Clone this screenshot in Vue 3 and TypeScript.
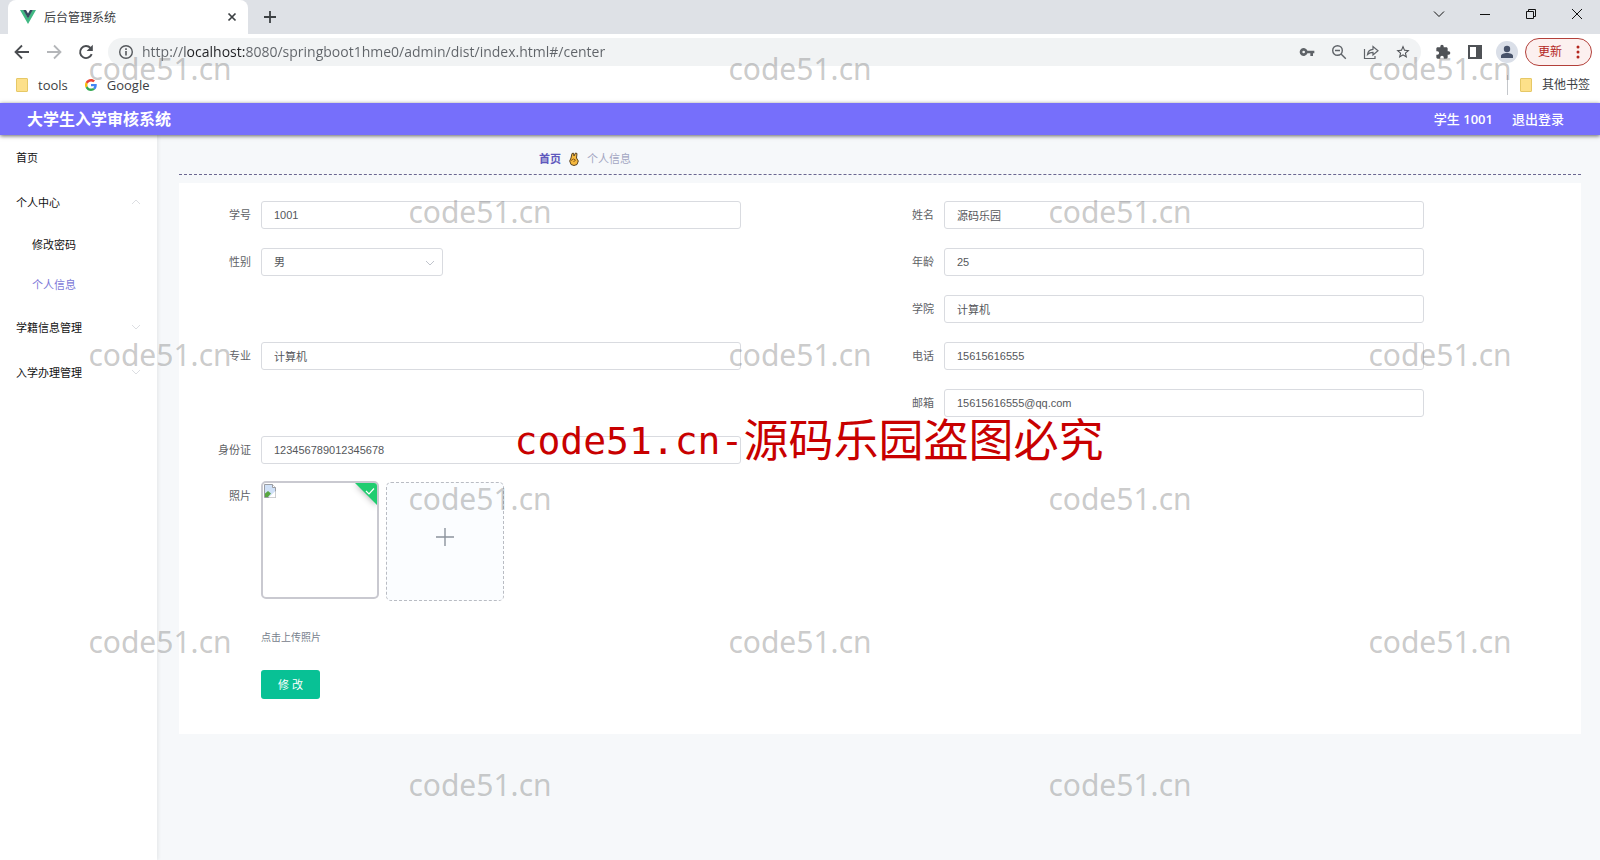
<script setup lang="ts">
import { ref } from 'vue'

interface Field {
  id: string
  label: string
  value: string
  side: 'left' | 'right'
  options?: string[]
}

interface MenuItem {
  label: string
  open?: boolean
  children?: { label: string; active?: boolean }[]
}

const fields = ref<Field[]>([
  { id: 'xuehao', label: '学号', value: '1001', side: 'left' },
  { id: 'xingming', label: '姓名', value: '源码乐园', side: 'right' },
  { id: 'xingbie', label: '性别', value: '男', side: 'left', options: ['男', '女'] },
  { id: 'nianling', label: '年龄', value: '25', side: 'right' },
  { id: 'xueyuan', label: '学院', value: '计算机', side: 'right' },
  { id: 'zhuanye', label: '专业', value: '计算机', side: 'left' },
  { id: 'dianhua', label: '电话', value: '15615616555', side: 'right' },
  { id: 'youxiang', label: '邮箱', value: '15615616555@qq.com', side: 'right' },
  { id: 'shenfenzheng', label: '身份证', value: '123456789012345678', side: 'left' },
])

const menu = ref<MenuItem[]>([
  { label: '首页' },
  {
    label: '个人中心',
    open: true,
    children: [{ label: '修改密码' }, { label: '个人信息', active: true }],
  },
  { label: '学籍信息管理', open: false, children: [] },
  { label: '入学办理管理', open: false, children: [] },
])

const url = ref('http://localhost:8080/springboot1hme0/admin/dist/index.html#/center')

// 5 x 6 grid, marks on every other cell
const cells = Array.from({ length: 30 }, (_, i) => (Math.floor(i / 5) + (i % 5)) % 2 === 0)
</script>

<template>
  <div class="window">
    <div class="tabs">
      <div class="tab">
        <svg class="favicon" viewBox="0 0 16 16"><path fill="#41b883" d="M0 1h3.5L8 9l4.500-8H16L8 15z" /><path fill="#35495e" d="M3.200 1H6l2 3.500L10 1h2.800L8 9.500z" /></svg>
        <span class="tab-title">后台管理系统</span>
        <button class="plain" aria-label="关闭标签页"><svg width="16" height="16" viewBox="0 0 16 16"><path d="M4.500 4.500l7 7m0-7l-7 7" stroke="#3c4043" stroke-width="1.700" /></svg></button>
      </div>
      <button class="plain new-tab" aria-label="新标签页"><svg width="16" height="16" viewBox="0 0 16 16"><path d="M8 2v12M2 8h12" stroke="#3c4043" stroke-width="1.800" /></svg></button>
      <div class="win-controls">
        <button class="plain" aria-label="搜索标签页"><svg width="14" height="14" viewBox="0 0 14 14"><path d="M2 4.500l5 5 5-5" /></svg></button>
        <button class="plain" aria-label="最小化"><svg width="14" height="14" viewBox="0 0 14 14"><path d="M2 7.500h10" /></svg></button>
        <button class="plain" aria-label="还原"><svg width="14" height="14" viewBox="0 0 14 14"><path d="M2.500 4.500h7v7h-7zM4.500 4.500v-2h7v7h-2" /></svg></button>
        <button class="plain" aria-label="关闭"><svg width="14" height="14" viewBox="0 0 14 14"><path d="M2 2l10 10M12 2L2 12" /></svg></button>
      </div>
    </div>

    <div class="toolbar">
      <button class="plain nav" aria-label="后退"><svg viewBox="0 0 16 16"><path d="M15 8H2M8 1.500L1.500 8 8 14.500" fill="none" stroke="#4a4d51" stroke-width="1.800" /></svg></button>
      <button class="plain nav" aria-label="前进"><svg viewBox="0 0 16 16"><path d="M1 8h13M8 1.500L14.500 8 8 14.500" fill="none" stroke="#b4b6b9" stroke-width="1.800" /></svg></button>
      <button class="plain nav" aria-label="刷新"><svg viewBox="0 0 16 16"><path d="M13.700 10.200A6 6 0 1 1 12.500 4" fill="none" stroke="#4a4d51" stroke-width="1.900" /><path d="M14.800 .8v6.200H8.600z" fill="#4a4d51" /></svg></button>
      <div class="address">
        <svg width="16" height="16" viewBox="0 0 16 16"><circle cx="8" cy="8" r="6.300" fill="none" stroke="#55585c" stroke-width="1.400" /><path d="M8 7v4.500M8 4.300v1.600" stroke="#55585c" stroke-width="1.600" /></svg>
        <input v-model="url" class="url" type="text" aria-label="地址" spellcheck="false" />
        <div class="actions">
          <button class="plain" aria-label="密码"><svg viewBox="0 0 24 24"><path fill="#5f6368" d="M12.650 10a6 6 0 1 0 0 4H17v4h4v-4h2v-4H12.650zM7 14a2 2 0 1 1 0-4 2 2 0 0 1 0 4z" /></svg></button>
          <button class="plain" aria-label="缩放"><svg viewBox="0 0 16 16" fill="none" stroke="#5f6368" stroke-width="1.400"><circle cx="6.500" cy="6.500" r="4.800" /><path d="M10 10l4.800 4.800M4 6.500h5" /></svg></button>
          <button class="plain" aria-label="分享"><svg viewBox="0 0 16 16" fill="none" stroke="#5f6368" stroke-width="1.200"><path d="M1.500 5v9.500h10.500V12M4.500 10.500c.5-3.500 2.500-5 5.500-5.200V2.500l5 4.300-5 4.200V8.300c-2.500 0-4 .7-5.500 2.200z" /></svg></button>
          <button class="plain" aria-label="收藏"><svg viewBox="0 0 24 24"><path fill="#4f5256" d="M22 9.240l-7.190-.62L12 2 9.190 8.630 2 9.240l5.460 4.730L5.820 21 12 17.270 18.180 21l-1.630-7.030L22 9.240zM12 15.400l-3.760 2.270 1-4.280-3.320-2.880 4.380-.38L12 6.100l1.710 4.040 4.380.38-3.320 2.880 1 4.280L12 15.400z" /></svg></button>
        </div>
      </div>
      <div class="extras">
        <button class="plain" aria-label="扩展程序"><svg viewBox="0 0 24 24"><path fill="#4f5256" d="M20.500 11H19V7c0-1.100-.9-2-2-2h-4V3.500a2.500 2.500 0 0 0-5 0V5H4c-1.100 0-2 .9-2 2v3.800h1.500a2.700 2.700 0 0 1 0 5.400H2V20c0 1.100.9 2 2 2h3.800v-1.500a2.700 2.700 0 0 1 5.400 0V22H17c1.100 0 2-.9 2-2v-4h1.500a2.500 2.500 0 0 0 0-5z" /></svg></button>
        <button class="plain" aria-label="侧边栏"><svg viewBox="0 0 16 16"><path fill="#4f5256" d="M1 1h14v14H1zM3 3v10h6V3z" fill-rule="evenodd" /></svg></button>
        <button class="plain avatar" aria-label="用户"><svg viewBox="0 0 16 16"><circle cx="8" cy="5" r="3.200" fill="#475269" /><path d="M2 14v-2c0-2 3-3 6-3s6 1 6 3v2z" fill="#475269" /></svg></button>
        <button class="update">更新<svg width="4" height="14" viewBox="0 0 4 14" fill="#b3261e"><circle cx="2" cy="2" r="1.500" /><circle cx="2" cy="7" r="1.500" /><circle cx="2" cy="12" r="1.500" /></svg></button>
      </div>
    </div>

    <div class="bookmarks">
      <a href="#tools"><i class="folder"></i>tools</a>
      <a href="#google"><svg width="12" height="12" viewBox="0 0 48 48"><path fill="#ea4335" d="M24 9.500c3.540 0 6.710 1.220 9.210 3.600l6.850-6.850C35.900 2.380 30.470 0 24 0 14.620 0 6.510 5.380 2.560 13.220l7.980 6.190C12.430 13.720 17.740 9.500 24 9.500z" /><path fill="#4285f4" d="M46.980 24.550c0-1.570-.15-3.090-.38-4.550H24v9.020h12.940c-.58 2.960-2.260 5.480-4.780 7.180l7.730 6c4.510-4.180 7.090-10.360 7.090-17.650z" /><path fill="#fbbc05" d="M10.530 28.590c-.48-1.450-.76-2.990-.76-4.590s.27-3.140.76-4.590l-7.980-6.190C.92 16.460 0 20.120 0 24c0 3.880.92 7.540 2.560 10.780l7.970-6.190z" /><path fill="#34a853" d="M24 48c6.480 0 11.930-2.130 15.890-5.810l-7.730-6c-2.150 1.450-4.920 2.300-8.160 2.300-6.260 0-11.570-4.220-13.470-9.910l-7.980 6.190C6.510 42.620 14.620 48 24 48z" /></svg>Google</a>
      <a class="other" href="#other"><i class="folder"></i>其他书签</a>
    </div>

    <header class="header">
      <h1>大学生入学审核系统</h1>
      <span class="user">学生 <b>1001</b></span>
      <button class="plain logout">退出登录</button>
    </header>

    <div class="body">
      <nav class="sidebar">
        <template v-for="item in menu" :key="item.label">
          <a class="item" :href="'#' + item.label">
            {{ item.label }}
            <svg v-if="item.children" width="10" height="10" viewBox="0 0 10 10" fill="none" stroke="#dcdee2">
              <path :d="item.open ? 'M1 7l4-4 4 4' : 'M1 3l4 4 4-4'" />
            </svg>
          </a>
          <a v-for="sub in item.children" :key="sub.label" class="item sub" :class="{ active: sub.active }" :href="'#' + sub.label">{{ sub.label }}</a>
        </template>
      </nav>

      <main class="main">
        <div class="crumbs">
          <a href="#home">首页</a>
          <svg width="10" height="14" viewBox="0 0 10 14"><path d="M2 6L3 1.500 4.500 1.200 5 4 6.500 1 8 1.500 7.500 6 9.300 9 8 12.500 5 13.500 2 12.500.7 9z" fill="#f5b83d" stroke="#5b4320" stroke-width="1" /><path d="M2 8.500l2.500-1.500 2 1-2 2" fill="none" stroke="#8a5a1a" /></svg>
          <span>个人信息</span>
        </div>

        <form class="card" @submit.prevent>
          <div class="fields">
            <div v-for="f in fields" :key="f.id" class="field" :class="f.side">
              <label :for="f.id">{{ f.label }}</label>
              <div v-if="f.options" class="select">
                <select :id="f.id" v-model="f.value">
                  <option v-for="o in f.options" :key="o">{{ o }}</option>
                </select>
                <svg width="10" height="10" viewBox="0 0 10 10" fill="none" stroke="#c0c4cc"><path d="M1 3l4 4 4-4" /></svg>
              </div>
              <input v-else :id="f.id" v-model="f.value" type="text" spellcheck="false" />
            </div>
          </div>

          <div class="field photo">
            <label for="photo">照片</label>
            <div class="photo-body">
              <div class="tiles">
                <div class="tile">
                  <svg width="12" height="14" viewBox="0 0 12 14"><path d="M.5.5h8l3 3v10H.5z" fill="#cfe0f7" stroke="#9a9da3" /><path d="M8.500.5v3h3" fill="#fff" stroke="#9a9da3" /><path d="M1 13V9.500L4 7l3 2.500L4 13z" fill="#58a641" /><path d="M4.500 13.500L11.500 7v6.500z" fill="#fff" /></svg>
                  <svg class="done" width="22" height="22" viewBox="0 0 22 22"><path d="M0 0h22v22z" fill="#20cd70" /><path d="M11 8l3 3 5-5.500" fill="none" stroke="#fff" stroke-width="1.200" /></svg>
                </div>
                <label class="add" for="photo">
                  <input id="photo" type="file" aria-label="上传照片" />
                  <svg width="18" height="18" viewBox="0 0 18 18"><path d="M9 0v18M0 9h18" stroke="#8c939d" stroke-width="1.400" /></svg>
                </label>
              </div>
              <p class="tip">点击上传照片</p>
              <button class="submit" type="submit">修 改</button>
            </div>
          </div>
        </form>
      </main>
    </div>

    <div class="marks">
      <span v-for="(on, i) in cells" :key="i"><template v-if="on">code51.cn</template></span>
    </div>
    <div class="notice"><span>code51.cn-</span>源码乐园盗图必究</div>
  </div>
</template>

<style>
body {
  margin: 0;
}
</style>

<style scoped>
* {
  box-sizing: border-box;
}
.window {
  position: relative;
  display: flex;
  flex-direction: column;
  min-height: 100vh;
  overflow: hidden;
  background: #fff;
  font-family: "Open Sans", "Noto Sans CJK SC", sans-serif;
  color: #3c4043;
}
svg {
  display: block;
  flex: none;
}
a {
  color: inherit;
  text-decoration: none;
}
button,
input,
select {
  font-family: inherit;
}
.plain {
  display: flex;
  align-items: center;
  justify-content: center;
  padding: 0;
  border: 0;
  background: none;
  color: inherit;
}
.tabs {
  display: flex;
  align-items: center;
  height: 34px;
  padding-left: 8px;
  background: #dee1e6;
}
.tab {
  display: flex;
  align-items: center;
  gap: 8px;
  width: 240px;
  height: 34px;
  padding: 0 8px 0 12px;
  border-radius: 8px 8px 0 0;
  background: #fff;
}
.favicon {
  width: 16px;
  height: 16px;
}
.tab-title {
  flex: 1;
  padding-top: 2px;
  font-size: 12px;
  line-height: 20px;
}
.new-tab {
  margin-left: 14px;
}
.win-controls {
  display: flex;
  align-self: flex-start;
  margin-left: auto;
}
.win-controls button {
  width: 46px;
  height: 28px;
}
.win-controls svg {
  fill: none;
  stroke: #111;
  stroke-width: 1;
}
.toolbar {
  display: flex;
  align-items: center;
  height: 36px;
  padding: 0 8px 0 14px;
}
.nav {
  width: 16px;
  margin-right: 16px;
}
.nav svg {
  width: 16px;
  height: 16px;
}
.address {
  display: flex;
  flex: 1;
  align-items: center;
  height: 28px;
  margin-left: -2px;
  padding: 0 10px;
  border-radius: 14px;
  background: #f1f3f4;
}
.url {
  flex: 1;
  min-width: 0;
  height: 28px;
  margin-left: 8px;
  padding: 0 0 2px;
  border: 0;
  outline: 0;
  font-size: 14px;
  color: #5f6368;
  background: linear-gradient(90deg, #5f6368 43px, #202124 43px, #202124 104px, #5f6368 104px);
  -webkit-background-clip: text;
  background-clip: text;
  -webkit-text-fill-color: transparent;
}
.actions {
  display: flex;
  gap: 16px;
}
.actions svg,
.extras svg {
  height: 16px;
}
.actions svg {
  width: 16px;
}
.extras {
  display: flex;
  align-items: center;
  gap: 16px;
  margin-left: 14px;
}
.extras .plain {
  width: 16px;
}
.extras .avatar {
  width: 22px;
  height: 22px;
  margin: 0 -3px;
  border-radius: 11px;
  background: #dadfe8;
}
.update {
  display: flex;
  align-items: center;
  gap: 14px;
  width: 67px;
  height: 28px;
  margin-left: -6px;
  padding: 0 10px 0 12px;
  border: 1px solid #b3403a;
  border-radius: 14px;
  background: #fcf0ef;
  color: #b3261e;
  font-size: 12px;
  line-height: 20px;
  white-space: nowrap;
}
.bookmarks {
  display: flex;
  align-items: center;
  height: 33px;
  padding: 0 10px 3px 16px;
  font-size: 13px;
  line-height: 20px;
}
.bookmarks a {
  display: flex;
  align-items: center;
  gap: 10px;
  margin-right: 17px;
}
.bookmarks .other {
  margin: 0 0 0 auto;
  padding-left: 12px;
  border-left: 1px solid #c4c7cb;
  font-size: 12px;
}
.folder {
  width: 12px;
  height: 14px;
  border: 1px solid #e6c866;
  border-radius: 1px;
  background: #fde08a;
}
.header {
  position: relative;
  display: flex;
  align-items: center;
  height: 32px;
  padding: 0 36px 0 27px;
  background: #766ffb;
  color: #fff;
  box-shadow: 0 1px 4px rgba(0, 0, 0, 0.6);
  font-size: 13px;
  font-weight: 500;
  line-height: 20px;
}
.header b {
  font-weight: 600;
}
h1 {
  flex: 1;
  margin: 0;
  font-size: 16px;
  font-weight: 700;
  line-height: 24px;
}
.logout {
  margin-left: 19px;
  font-size: 13px;
  font-weight: 500;
  line-height: 20px;
}
.body {
  display: flex;
  flex: 1;
  background: #f6f8fa;
  font-family: "Liberation Sans", "Noto Sans CJK SC", sans-serif;
  font-size: 11px;
}
.sidebar {
  width: 157px;
  background: #fff;
  box-shadow: 1px 0 4px rgba(0, 0, 0, 0.08);
  color: #111;
}
.item {
  display: flex;
  align-items: center;
  justify-content: space-between;
  height: 45px;
  padding: 0 16px 2px;
}
.sub {
  height: 40px;
  padding-left: 32px;
}
.active {
  color: #7c78d8;
}
.main {
  flex: 1;
  min-width: 0;
  padding: 7px 19px 0 22px;
}
.crumbs {
  display: flex;
  align-items: center;
  gap: 8px;
  height: 33px;
  padding: 2px 0 0 360px;
  border-bottom: 1px dashed #6b6791;
  color: #a3a6c2;
  line-height: 16px;
}
.crumbs a {
  color: #5f58bd;
  font-weight: 700;
}
.card {
  margin-top: 8px;
  padding: 18px 18px 35px;
  background: #fff;
  color: #606266;
}
.fields {
  display: grid;
  grid-template-columns: 1fr 1fr;
  gap: 19px 0;
}
.field {
  display: flex;
}
.left {
  grid-column: 1;
}
.right {
  grid-column: 2;
}
.field > label {
  width: 64px;
  padding-right: 10px;
  line-height: 28px;
  text-align: right;
}
.field > input,
select {
  height: 28px;
  padding: 0 12px;
  border: 1px solid #d9dbe0;
  border-radius: 3px;
  outline: 0;
  background: #fff;
  color: #55575b;
  font-size: 11px;
}
.field > input {
  width: 480px;
}
.select {
  position: relative;
  width: 182px;
}
select {
  width: 100%;
  appearance: none;
}
.select svg {
  position: absolute;
  top: 10px;
  right: 8px;
  pointer-events: none;
}
.photo {
  margin-top: 17px;
}
.photo > label {
  line-height: 30px;
}
.tiles {
  display: flex;
  gap: 7px;
  height: 120px;
}
.tile {
  position: relative;
  width: 118px;
  height: 118px;
  padding: 1px;
  border: 2px solid #c9c9d0;
  border-radius: 5px;
  overflow: hidden;
}
.done {
  position: absolute;
  top: 0;
  right: 0;
  filter: drop-shadow(0 1px 3px rgba(0, 0, 0, 0.3));
}
.add {
  display: flex;
  align-items: center;
  justify-content: center;
  align-self: flex-end;
  width: 118px;
  height: 119px;
  padding-bottom: 10px;
  border: 1px dashed #b9bcc3;
  border-radius: 5px;
  background: #fbfdff;
}
.add input {
  position: absolute;
  width: 1px;
  height: 1px;
  opacity: 0;
}
.tip {
  margin: 27px 0 22px;
  color: #76808c;
  font-size: 10px;
  line-height: 20px;
}
.submit {
  width: 59px;
  height: 29px;
  padding: 0 0 2px;
  border: 0;
  border-radius: 3px;
  background: #08c195;
  color: #fff;
  font-size: 11px;
}
.marks {
  position: absolute;
  inset: 0;
  display: grid;
  grid-template: repeat(6, 1fr) / repeat(5, 1fr);
  place-items: center;
  padding-bottom: 0;
  color: rgba(120, 120, 120, 0.4);
  font-family: "Noto Sans", sans-serif;
  font-size: 30px;
  line-height: 40px;
  pointer-events: none;
}
.marks span {
  padding-bottom: 6px;
}
.notice {
  position: absolute;
  inset: 0;
  display: flex;
  align-items: center;
  justify-content: center;
  padding: 16px 0 0 18px;
  color: #c80000;
  font-family: "Noto Sans CJK SC", sans-serif;
  font-size: 45px;
  line-height: 56px;
  pointer-events: none;
}
.notice span {
  padding-top: 6px;
  font-family: "DejaVu Sans Mono", monospace;
  font-size: 38px;
}
</style>
